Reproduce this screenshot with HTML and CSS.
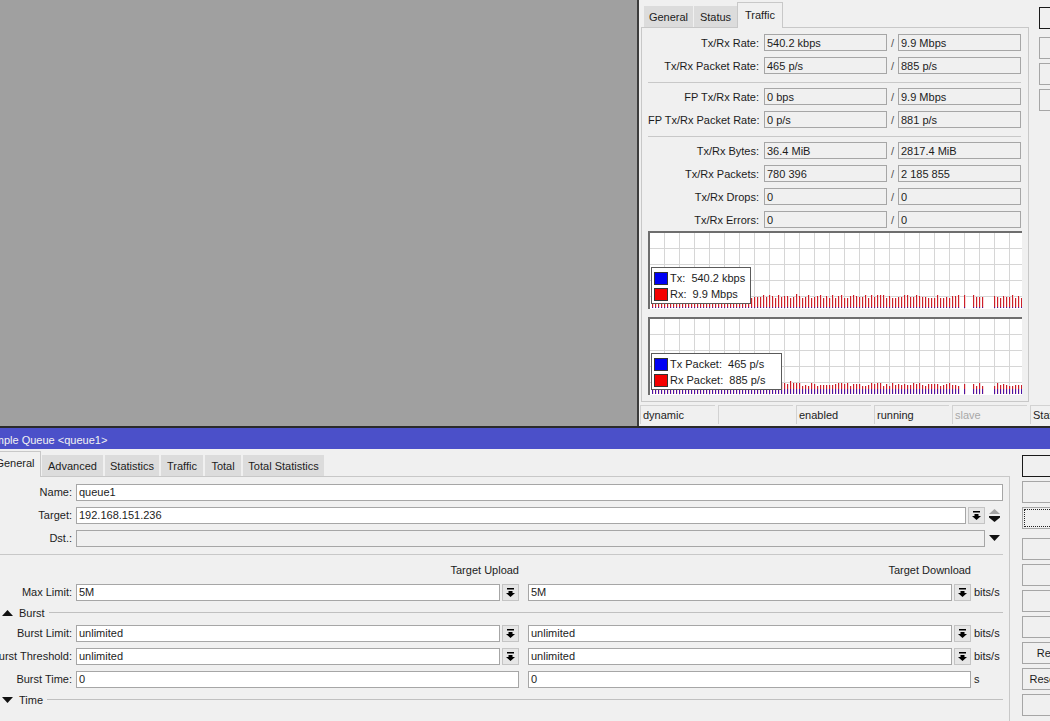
FILE: index.html
```html
<!DOCTYPE html>
<html lang="en">
  <head>
    <meta charset="UTF-8" />
    <title>Simple Queue - queue1</title>
    <link rel="stylesheet" href="styles.css">
  </head>
  <body>
    <svg class="defs" width="0" height="0">
      <symbol id="drop" viewBox="0 0 9 9">
        <path d="M1 0h7v1.5H1z" />
        <path d="M2.500 3h4v2H9L4.500 9 0 5h2.500z" />
      </symbol>
    </svg>

    <!-- interface window -->
    <div class="win win-top">
      <div class="win-body">
        <div class="main">
          <div class="tabs">
            <div class="tab tab-general">General</div>
            <div class="tab tab-status">Status</div>
            <div class="tab active tab-traffic">Traffic</div>
          </div>
          <div class="panel panel-traffic">
            <div class="row"><label>Tx/Rx Rate:</label><div class="field">540.2 kbps</div><i>/</i><div class="field">9.9 Mbps</div></div>
            <div class="row"><label>Tx/Rx Packet Rate:</label><div class="field">465 p/s</div><i>/</i><div class="field">885 p/s</div></div>
            <hr />
            <div class="row"><label>FP Tx/Rx Rate:</label><div class="field">0 bps</div><i>/</i><div class="field">9.9 Mbps</div></div>
            <div class="row"><label>FP Tx/Rx Packet Rate:</label><div class="field">0 p/s</div><i>/</i><div class="field">881 p/s</div></div>
            <hr />
            <div class="row"><label>Tx/Rx Bytes:</label><div class="field">36.4 MiB</div><i>/</i><div class="field">2817.4 MiB</div></div>
            <div class="row"><label>Tx/Rx Packets:</label><div class="field">780 396</div><i>/</i><div class="field">2 185 855</div></div>
            <div class="row"><label>Tx/Rx Drops:</label><div class="field">0</div><i>/</i><div class="field">0</div></div>
            <div class="row"><label>Tx/Rx Errors:</label><div class="field">0</div><i>/</i><div class="field">0</div></div>

            <div class="graph graph-rate">
              <svg class="bars" id="bars-rate" width="372" height="20"></svg>
              <div class="legend">
                <div class="legend-row"><span class="swatch blue"></span>Tx:&nbsp; 540.2 kbps</div>
                <div class="legend-row"><span class="swatch red"></span>Rx:&nbsp; 9.9 Mbps</div>
              </div>
            </div>
            <div class="graph graph-packet">
              <svg class="bars" id="bars-packet" width="372" height="20"></svg>
              <div class="legend">
                <div class="legend-row"><span class="swatch blue"></span>Tx Packet:&nbsp; 465 p/s</div>
                <div class="legend-row"><span class="swatch red"></span>Rx Packet:&nbsp; 885 p/s</div>
              </div>
            </div>
          </div>
          <div class="status">
            <div class="cell">dynamic</div>
            <div class="cell"></div>
            <div class="cell">enabled</div>
            <div class="cell">running</div>
            <div class="cell muted">slave</div>
            <div class="cell">Status</div>
          </div>
        </div>
        <div class="buttons">
          <div class="btn primary">OK</div>
          <div class="btn">Cancel</div>
          <div class="btn">Apply</div>
          <div class="btn">Disable</div>
        </div>
      </div>
    </div>

    <!-- queue window -->
    <div class="win win-queue">
      <div class="title">Simple Queue &lt;queue1&gt;</div>
      <div class="win-body">
        <div class="main">
          <div class="tabs">
            <div class="tab active tab-main">General</div>
            <div class="tab tab-advanced">Advanced</div>
            <div class="tab tab-stats">Statistics</div>
            <div class="tab tab-queue-traffic">Traffic</div>
            <div class="tab tab-total">Total</div>
            <div class="tab tab-total-stats">Total Statistics</div>
          </div>
          <div class="panel panel-queue">
            <div class="row"><label>Name:</label><div class="field edit grow">queue1</div></div>
            <div class="row">
              <label>Target:</label>
              <div class="field edit grow">192.168.151.236</div>
              <div class="drop"><svg width="9" height="9"><use href="#drop" /></svg></div>
              <div class="side">
                <svg width="13" height="14" viewBox="0 0 13 14"><path d="M6.500 0 12 5H1z" fill="#a3a3a3" /><path d="M1 7h11v1.500L6.500 13 1 8.500z" fill="#111" /></svg>
              </div>
            </div>
            <div class="row">
              <label>Dst.:</label>
              <div class="field grow"></div>
              <div class="side">
                <svg width="13" height="7" viewBox="0 0 13 7"><path d="M1 0h11L6.500 6z" fill="#111" /></svg>
              </div>
            </div>
            <hr class="wide" />
            <div class="row heads">
              <div class="col head">Target Upload</div>
              <div class="col head">Target Download</div>
            </div>
            <div class="row limit">
              <label>Max Limit:</label>
              <div class="col"><div class="field edit grow">5M</div><div class="drop"><svg width="9" height="9"><use href="#drop" /></svg></div></div>
              <div class="col"><div class="field edit grow">5M</div><div class="drop"><svg width="9" height="9"><use href="#drop" /></svg></div></div>
              <div class="unit">bits/s</div>
            </div>
            <div class="section section-burst">
              <svg width="11" height="6" viewBox="0 0 11 6"><path d="M5.500 0 11 6H0z" fill="#111" /></svg>
              <span>Burst</span>
            </div>
            <div class="row">
              <label>Burst Limit:</label>
              <div class="col"><div class="field edit grow">unlimited</div><div class="drop"><svg width="9" height="9"><use href="#drop" /></svg></div></div>
              <div class="col"><div class="field edit grow">unlimited</div><div class="drop"><svg width="9" height="9"><use href="#drop" /></svg></div></div>
              <div class="unit">bits/s</div>
            </div>
            <div class="row">
              <label>Burst Threshold:</label>
              <div class="col"><div class="field edit grow">unlimited</div><div class="drop"><svg width="9" height="9"><use href="#drop" /></svg></div></div>
              <div class="col"><div class="field edit grow">unlimited</div><div class="drop"><svg width="9" height="9"><use href="#drop" /></svg></div></div>
              <div class="unit">bits/s</div>
            </div>
            <div class="row">
              <label>Burst Time:</label>
              <div class="col"><div class="field edit grow">0</div></div>
              <div class="col"><div class="field edit grow">0</div></div>
              <div class="unit">s</div>
            </div>
            <div class="section section-time">
              <svg width="11" height="6" viewBox="0 0 11 6"><path d="M0 0h11L5.500 6z" fill="#111" /></svg>
              <span>Time</span>
            </div>
          </div>
        </div>
        <div class="buttons">
          <div class="btn primary">OK</div>
          <div class="btn">Cancel</div>
          <div class="btn focus">Apply</div>
          <div class="btn gap">Disable</div>
          <div class="btn">Comment</div>
          <div class="btn">Copy</div>
          <div class="btn">Remove</div>
          <div class="btn">Reset Counters</div>
          <div class="btn">Reset All Counters</div>
          <div class="btn">Torch</div>
        </div>
      </div>
    </div>

    <script src="script.js"></script>
  </body>
</html>
```

FILE: styles.css
```css
* {
  margin: 0;
  padding: 0;
  box-sizing: border-box;
}

html,
body {
  height: 100%;
  overflow: hidden;
}

body {
  background: #a0a0a0;
  color: #1c1c1c;
  font-family: "Liberation Sans", Arial, sans-serif;
  font-size: 11px;
}

.defs {
  position: absolute;
}

/* windows sit on the desktop */
.win {
  position: absolute;
  background: #f0f0f0;
  overflow: hidden;
}
.win-top {
  left: 637px;
  top: -1px;
  width: 480px;
  height: 428px;
  border-left: 2px solid #3c3c3c;
}
.win-queue {
  left: -20px;
  top: 426px;
  width: 1160px;
  height: 320px;
  border-top: 2px solid #2a2a2a;
}

.title {
  height: 21px;
  line-height: 24px;
  padding-left: 5px;
  background: #4b50c9;
  color: #f2f2f2;
}

.win-body {
  display: flex;
}

/* tabs */
.tabs {
  display: flex;
  align-items: flex-end;
  gap: 2px;
  padding-left: 9px;
  height: 27px;
}
.tab {
  height: 21px;
  line-height: 22px;
  background: #dcdcdc;
  text-align: center;
  flex: none;
}
.tab.active {
  height: 26px;
  line-height: 24px;
  background: #f0f0f0;
  border: 1px solid #c8c8c8;
  border-bottom: 0;
  margin-bottom: -1px;
  position: relative;
  z-index: 1;
}
.tab.tab-main {
  width: 52px;
  line-height: 22px;
  margin-right: -1px;
}
.tab-advanced {
  width: 61px;
}
.tab-stats {
  width: 54px;
}
.tab-queue-traffic {
  width: 42px;
}
.tab-total {
  width: 36px;
}
.tab-total-stats {
  width: 81px;
}

.panel {
  border: 1px solid #c8c8c8;
}

.row {
  display: flex;
  align-items: center;
  height: 17px;
  margin-bottom: 6px;
}
.row label {
  text-align: right;
  white-space: nowrap;
}
.row i {
  width: 11px;
  font-style: normal;
  text-align: center;
  color: #555;
}

.field {
  height: 17px;
  line-height: 16px;
  padding-left: 2px;
  background: #f0f0f0;
  border: 1px solid #a6a6a6;
  white-space: nowrap;
  overflow: hidden;
}
.field.edit {
  background: #fff;
}
.grow {
  flex: 1;
}

hr {
  height: 1px;
  border: 0;
  background: #c8c8c8;
}

/* traffic tab */
.main {
  flex: none;
}
.win-top .main {
  width: 390px;
}
.win-top .tabs {
  padding-left: 5px;
  gap: 1px;
  height: 28px;
}
.tab-general {
  width: 49px;
}
.tab-status {
  width: 43px;
}
.tab-traffic {
  width: 46px;
  margin-left: -1px;
}
.panel-traffic {
  margin-left: 2px;
  width: 388px;
  height: 375px;
  padding: 6px 7px 0 6px;
}
.panel-traffic label {
  width: 111px;
  margin-right: 5px;
  flex: none;
}
.panel-traffic .field {
  width: 123px;
  flex: none;
}
.panel-traffic hr {
  margin: 8px 0 5px;
}

.graph {
  position: relative;
  width: 374px;
  border-top: 2px solid #6e6e6e;
  border-left: 2px solid #6e6e6e;
  background-color: #fff;
  background-image:
    linear-gradient(#d6d6d6 1px, transparent 1px),
    linear-gradient(90deg, #d6d6d6 1px, transparent 1px);
  background-size: 15px 16px;
  background-position: 14px 15px;
}
.graph-rate {
  height: 78px;
  margin-top: -3px;
}
.graph-packet {
  height: 78px;
  margin-top: 8px;
}

.bars {
  position: absolute;
  left: 0;
  bottom: 1px;
  display: block;
}

.legend {
  position: absolute;
  left: 1px;
  bottom: 5px;
  padding: 2px 2px 1px;
  background: #fff;
  border: 1px solid #5a5a5a;
  white-space: nowrap;
}
.graph-rate .legend {
  width: 100px;
}
.graph-packet .legend {
  width: 131px;
}
.legend-row {
  display: flex;
  align-items: center;
  height: 16px;
  gap: 2px;
}
.swatch {
  width: 14px;
  height: 13px;
  border: 1px solid #333;
}
.swatch.blue {
  background: #0000f4;
}
.swatch.red {
  background: #f40000;
}

.status {
  display: flex;
  gap: 3px;
  margin: 3px 0 0 1px;
}
.cell {
  flex: none;
  width: 75px;
  height: 19px;
  line-height: 19px;
  padding-left: 2px;
  border: 1px solid #d2d2d2;
  border-bottom: 0;
  border-right: 0;
}
.muted {
  color: #a8a8a8;
}

/* right side buttons */
.buttons {
  flex: none;
  display: flex;
  flex-direction: column;
  gap: 4px;
  width: 106px;
}
.win-top .buttons {
  margin: 8px 0 0 10px;
}
.win-top .btn.primary {
  margin-bottom: 4px;
}
.win-queue .buttons {
  margin: 6px 0 0 12px;
}
.btn {
  height: 22px;
  line-height: 20px;
  text-align: center;
  white-space: nowrap;
  background: #f0f0f0;
  border: 1px solid #a6a6a6;
}
.btn.primary {
  border-color: #1a1a1a;
}
.btn.focus {
  outline: 1px dotted #222;
  outline-offset: -3px;
}
.btn.gap {
  margin-top: 5px;
}

/* general tab */
.win-queue .main {
  width: 1030px;
}
.panel-queue {
  margin-left: 4px;
  width: 1026px;
  height: 300px;
  padding: 7px 6px 0 0;
}
.panel-queue label {
  width: 87px;
  margin-right: 4px;
  flex: none;
  padding-bottom: 1px;
}
.panel-queue .field {
  line-height: 15px;
}
.drop {
  flex: none;
  width: 17px;
  height: 17px;
  margin-left: 2px;
  display: flex;
  align-items: center;
  justify-content: center;
  border: 1px solid #c4c4c4;
  background: #e6e6e6;
}
.side {
  flex: none;
  width: 18px;
  display: flex;
  justify-content: center;
}
.col {
  flex: none;
  display: flex;
  width: 443px;
  margin-right: 9px;
}
.col:nth-last-child(2) {
  margin-right: 3px;
}
.unit {
  flex: none;
  padding-bottom: 1px;
}
hr.wide {
  margin: 7px 0 0;
}
.heads {
  margin: 7px 0 5px;
  height: 17px;
  padding-left: 91px;
}
.heads .col {
  margin-right: 9px;
  padding-bottom: 1px;
}
.head {
  justify-content: flex-end;
}
.section {
  display: flex;
  align-items: center;
  gap: 6px;
  height: 13px;
  padding-left: 17px;
}
.section::after {
  content: "";
  flex: 1;
  height: 1px;
  background: #c0c0c0;
  margin-left: -2px;
}
.section-burst {
  margin: -1px 0 6px;
}
.section-time {
  margin-top: -1px;
}
```

FILE: script.js
```js
// bar charts of the two traffic graphs
const NS = "http://www.w3.org/2000/svg";
const START = 2;
const STEP = 3;
const COUNT = 124;

// gaps near the right end, in graph x coordinates
function isGap(x) {
  return x === 311 || (x > 316 && x < 321) || (x > 334 && x < 342);
}

function addRect(svg, x, y, h, color) {
  const r = document.createElementNS(NS, "rect");
  r.setAttribute("x", x);
  r.setAttribute("y", y);
  r.setAttribute("width", 1);
  r.setAttribute("height", h);
  r.setAttribute("fill", color);
  svg.appendChild(r);
}

function drawBars(id, seed, minHeight, blueHeight) {
  const svg = document.getElementById(id);
  let n = seed;
  for (let i = 0; i < COUNT; i++) {
    const x = START + i * STEP;
    if (isGap(x)) continue;
    n = (n * 137 + 59) % 251;
    const h = minHeight + (n % 4) + (n % 17 === 0 ? 2 : 0);
    addRect(svg, x + 1, 20 - h, h, "#f8d4d6");
    addRect(svg, x, 20 - h, h, "#cc2029");
    addRect(svg, x, 20 - blueHeight, blueHeight, "#4a14a4");
  }
}

drawBars("bars-rate", 17, 10, 1);
drawBars("bars-packet", 91, 8, 5);
```
